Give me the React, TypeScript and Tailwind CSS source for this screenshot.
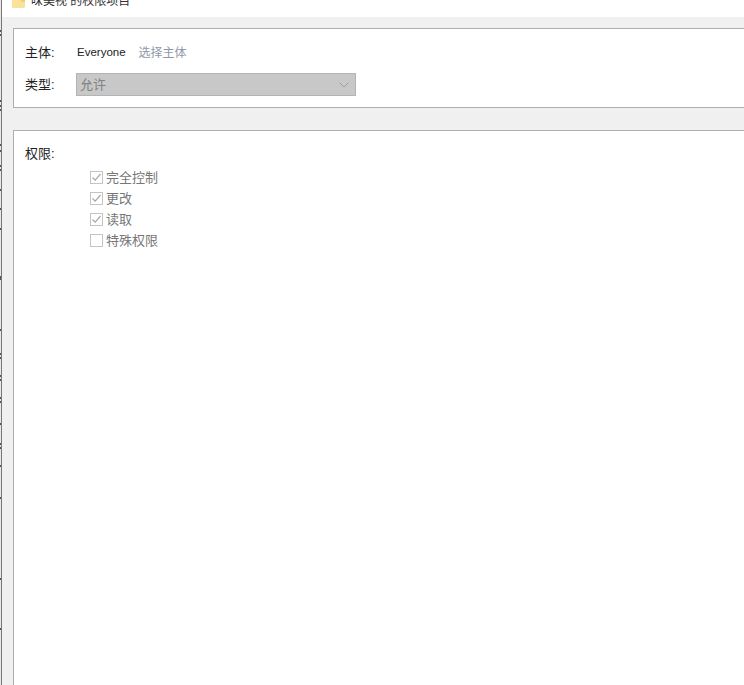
import React from 'react';

const font = { fontFamily: '"Liberation Sans", "Noto Sans CJK SC", sans-serif' };

// bits of the window behind, showing in the one pixel left of the border
const behind = [30, 34, 100, 105, 109, 144, 150, 165, 169, 189, 208, 228, 276, 278, 329, 353, 357, 375, 379, 397, 401, 423, 443, 447, 465, 497, 578, 628];

const Check: React.FC<{ label: string; checked?: boolean }> = ({ label, checked }) => (
  <div className="flex h-[21px] items-center">
    <span className="flex h-[13px] w-[13px] items-center justify-center border border-[#c4c4c4] bg-white">
      {checked && (
        <svg width="11" height="11" viewBox="0 0 11 11" fill="none">
          <path d="M1.5 5.5 L4.2 8.2 L9.5 2" stroke="#a8a8a8" strokeWidth="1.2" />
        </svg>
      )}
    </span>
    <span className="ml-[3px] text-[13px] text-[#777]">{label}</span>
  </div>
);

export default function App() {
  return (
    <div className="flex h-[685px] w-[744px] overflow-hidden bg-white text-[13px] text-[#222]" style={font}>
      <svg width="1" height="685" className="shrink-0">
        <rect width="1" height="685" fill="#e8e8e8" />
        {behind.map((y) => (
          <rect key={y} y={y} width="1" height="2" fill="#555" />
        ))}
      </svg>
      <div className="w-px shrink-0 bg-[#777]" />
      <div className="flex min-w-0 flex-1 flex-col">
        <div className="flex h-[17px] shrink-0 items-end overflow-hidden bg-white pl-[10px]">
          <svg width="13" height="12" viewBox="0 0 13 12" className="mb-[8px] shrink-0">
            <path d="M0 0 H13 V10 Q13 11 12 11 H1 Q0 11 0 10 Z" fill="#fbe29a" />
            <path d="M9 0 H13 V5 H9 Z" fill="#f5cf6c" />
          </svg>
          <span className="mb-[6px] ml-[6px] text-[12px] leading-5 text-[#333]">味美视 的权限项目</span>
        </div>
        <div className="flex flex-1 flex-col bg-[#f0f0f0] pl-[11px] pt-[11px]">
          <div className="h-[80px] shrink-0 border-y border-l border-[#aeaeae] bg-white pl-[11px]">
            <div className="flex h-[44px] items-center pt-[4px]">
              <span className="w-[52px]">主体:</span>
              <span className="text-[11.5px]">Everyone</span>
              <span className="ml-[13px] text-[12px] text-[#8f97a8]">选择主体</span>
            </div>
            <div className="flex items-center">
              <span className="w-[51px]">类型:</span>
              <div className="flex h-[23px] w-[280px] items-center justify-between border border-[#b4b4b4] bg-[#c8c8c8] pl-[3px] pr-[3px] text-[#828282]">
                <span>允许</span>
                <svg width="10" height="6" viewBox="0 0 10 6" fill="none" className="mr-[3px] mt-[1px]">
                  <path d="M0.5 0.5 L5 5 L9.5 0.5" stroke="#a0a0a0" strokeWidth="1" />
                </svg>
              </div>
            </div>
          </div>
          <div className="mt-[22px] flex-1 border-l border-t border-[#aeaeae] bg-white pl-[11px] pt-[14px]">
            <div className="leading-[18px]">权限:</div>
            <div className="mt-[4px] pl-[65px]">
              <Check label="完全控制" checked />
              <Check label="更改" checked />
              <Check label="读取" checked />
              <Check label="特殊权限" />
            </div>
          </div>
        </div>
      </div>
    </div>
  );
}
